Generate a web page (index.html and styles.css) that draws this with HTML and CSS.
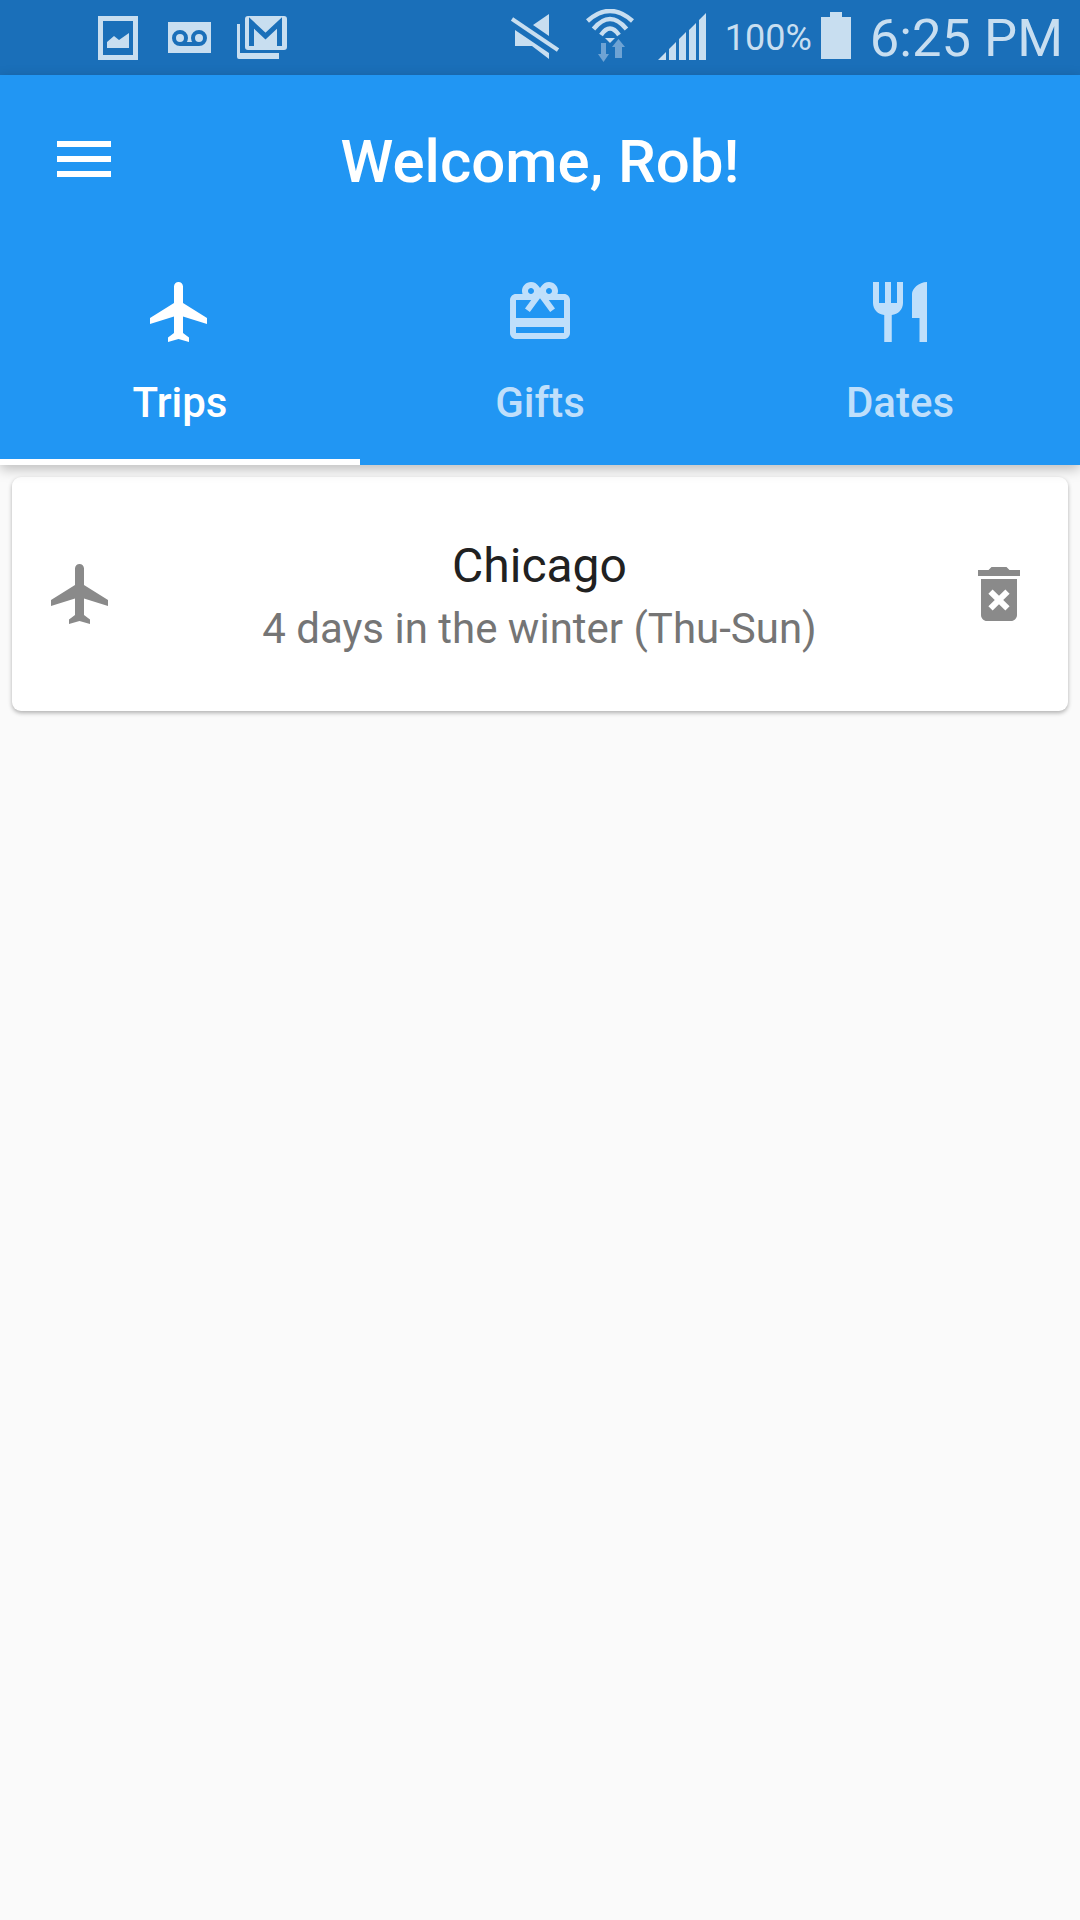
FILE: index.html
```html
<!DOCTYPE html>
<html lang="en">
<head>
    <meta charset="UTF-8">
    <title>Welcome, Rob!</title>
    <link rel="stylesheet" href="styles.css">
</head>
<body>
    <div class="status-bar">
        <div class="status-left">
            <svg class="st-image" viewBox="0 0 40 44"><path fill="#c8def0" fill-rule="evenodd" d="M0 0h40v44H0zM5 5v34h30V5z"/><path fill="#c8def0" d="M9 32v-6l7-6 5 4 10-7v15z"/></svg>
            <svg class="st-voicemail" viewBox="0 0 43 31"><path fill="#c8def0" d="M0 0h43v31H0z"/><g fill="none" stroke="#1a6fb9" stroke-width="4"><circle cx="12" cy="16" r="6"/><circle cx="31" cy="16" r="6"/><path d="M12 22h19"/></g></svg>
            <svg class="st-gmail" viewBox="0 0 50 43"><path fill="#c8def0" d="M0 8h3v29h39v6H2a2 2 0 0 1-2-2z"/><rect x="8" y="0" width="42" height="34" rx="3" fill="#c8def0"/><path fill="none" stroke="#1a6fb9" stroke-width="5" d="M14.500 30V7l14 13 14-13v23"/></svg>
        </div>
        <div class="status-right">
            <svg class="st-mute" viewBox="0 0 48 46"><path fill="#c8def0" d="M38 1L22 12l16 11zM4 17l34 23v6L21 33H4z"/><path stroke="#c8def0" stroke-width="4" d="M1 6l46 31"/></svg>
            <svg class="st-wifi" viewBox="0 0 50 53"><g fill="none" stroke="#c8def0" stroke-width="4.500"><path d="M2.500 12Q25-8 47.500 12"/><path d="M8.500 20Q25 0 41.500 20"/><path d="M16 26Q25 13 34 26"/></g><path fill="#c8def0" d="M20 29h10l-5 5z"/><path fill="#6ea3d4" d="M16 34h5v11h3l-5.500 8L13 45h3zM30 49V38h-3l6.500-8 6.500 8h-3v11z"/></svg>
            <svg class="st-signal" viewBox="0 0 49 47"><path fill="#c8def0" d="M0 47l8-8v8zM11 36l7-7v18h-7zM21 26l7-7v28h-7zM31 17l7-7v37h-7zM41 7l7-7v47h-7z"/></svg>
            <span class="st-pct">100%</span>
            <svg class="st-battery" viewBox="0 0 30 47"><path fill="#c8def0" d="M9 0h12v5h9v42H0V5h9z"/></svg>
            <span class="st-time">6:25 PM</span>
        </div>
    </div>

    <header class="app-header">
        <div class="title-row">
            <svg class="menu-icon" viewBox="0 0 24 24"><path fill="#fff" d="M3 18h18v-2H3v2zm0-5h18v-2H3v2zm0-7v2h18V6H3z"/></svg>
            <h1>Welcome, Rob!</h1>
        </div>
        <nav class="tabs">
            <div class="tab active">
                <svg class="tab-icon" viewBox="0 0 24 24"><path d="M21 16v-2l-8-5V3.500c0-.83-.67-1.500-1.500-1.500S10 2.670 10 3.500V9l-8 5v2l8-2.500V19l-2 1.500V22l3.500-1 3.500 1v-1.500L13 19v-5.500l8 2.500z"/></svg>
                <span>Trips</span>
            </div>
            <div class="tab">
                <svg class="tab-icon" viewBox="0 0 24 24"><path d="M20 6h-2.180c.11-.31.18-.65.18-1 0-1.660-1.340-3-3-3-1.050 0-1.960.54-2.500 1.350l-.5.67-.5-.68C10.960 2.540 10.050 2 9 2 7.340 2 6 3.340 6 5c0 .35.07.69.18 1H4c-1.110 0-1.990.89-1.990 2L2 19c0 1.110.89 2 2 2h16c1.110 0 2-.89 2-2V8c0-1.110-.89-2-2-2zm-5-2c.55 0 1 .45 1 1s-.45 1-1 1-1-.45-1-1 .45-1 1-1zM9 4c.55 0 1 .45 1 1s-.45 1-1 1-1-.45-1-1 .45-1 1-1zm11 15H4v-2h16v2zm0-5H4V8h5.080L7 10.830 8.620 12 11 8.760l1-1.360 1 1.360L15.380 12 17 10.830 14.920 8H20v6z"/></svg>
                <span>Gifts</span>
            </div>
            <div class="tab">
                <svg class="tab-icon" viewBox="0 0 24 24"><path d="M11 9H9V2H7v7H5V2H3v7c0 2.120 1.660 3.840 3.750 3.970V22h2.500v-9.030C11.340 12.840 13 11.120 13 9V2h-2v7zm5-3v8h2.500v8H21V2c-2.760 0-5 2.240-5 4z"/></svg>
                <span>Dates</span>
            </div>
        </nav>
    </header>

    <main class="lista">
        <div class="card">
            <svg class="card-icon" viewBox="0 0 24 24"><path d="M21 16v-2l-8-5V3.500c0-.83-.67-1.500-1.500-1.500S10 2.670 10 3.500V9l-8 5v2l8-2.500V19l-2 1.500V22l3.500-1 3.500 1v-1.500L13 19v-5.500l8 2.500z"/></svg>
            <div class="card-text">
                <div class="card-title">Chicago</div>
                <div class="card-sub">4 days in the winter (Thu-Sun)</div>
            </div>
            <svg class="card-icon" viewBox="0 0 24 24"><path d="M6 19c0 1.100.9 2 2 2h8c1.100 0 2-.9 2-2V7H6v12zm2.460-7.120l1.410-1.410L12 12.590l2.120-2.120 1.410 1.410L13.410 14l2.120 2.120-1.410 1.410L12 15.410l-2.120 2.120-1.410-1.410L10.590 14l-2.130-2.120zM15.500 4l-1-1h-5l-1 1H5v2h14V4z"/></svg>
        </div>
    </main>
</body>
</html>
```

FILE: styles.css
```css
* {
    box-sizing: border-box;
    margin: 0;
    padding: 0;
}

body {
    width: 1080px;
    height: 1920px;
    overflow: hidden;
    background-color: #fafafa;
    font-family: Roboto, sans-serif;
}

svg {
    display: block;
    flex-shrink: 0;
}

/* barra de status */
.status-bar {
    height: 75px;
    background-color: #1a6fb9;
    display: flex;
    align-items: center;
    justify-content: space-between;
    padding: 0 17px 0 98px;
    color: #c8def0;
}

.status-left,
.status-right {
    display: flex;
    align-items: center;
}

.st-image { width: 40px; height: 44px; margin-right: 30px; }
.st-voicemail { width: 43px; height: 31px; margin-right: 26px; }
.st-gmail { width: 50px; height: 43px; }
.st-mute { width: 48px; height: 46px; margin: 0 26px 3px 0; }
.st-wifi { width: 50px; height: 53px; margin: 0 23px 4px 0; }
.st-signal { width: 49px; height: 47px; margin: 0 18px 2px 0; }
.st-pct { font-size: 36px; margin-right: 9px; }
.st-battery { width: 30px; height: 47px; margin: 0 19px 4px 0; }
.st-time { font-size: 52.500px; }

/* cabecalho */
.app-header {
    height: 390px;
    background-color: #2196f3;
    color: #fff;
    position: relative;
    box-shadow: 0 4px 12px rgba(0, 0, 0, 0.25);
}

.title-row {
    height: 168px;
    display: flex;
    align-items: center;
    justify-content: center;
    position: relative;
}

.menu-icon {
    width: 72px;
    height: 72px;
    position: absolute;
    left: 48px;
    top: 48px;
}

h1 {
    font-size: 60px;
    font-weight: 500;
    padding-top: 4px;
}

.tabs {
    height: 222px;
    display: grid;
    grid-template-columns: repeat(3, 1fr);
}

.tab {
    display: flex;
    flex-direction: column;
    align-items: center;
    padding-top: 33px;
    color: #bfdffb;
    font-size: 42px;
    font-weight: 500;
    line-height: 48px;
}

.tab span {
    margin-top: 31px;
}

.tab.active {
    color: #fff;
    border-bottom: 6px solid #fff;
}

.tab-icon {
    width: 72px;
    height: 72px;
    fill: currentColor;
}

/* lista de viagens */
.lista {
    padding: 12px;
}

.card {
    height: 234px;
    background-color: #fff;
    border-radius: 9px;
    box-shadow: 0 2px 4px rgba(0, 0, 0, 0.3);
    display: flex;
    align-items: center;
    padding: 0 33px;
}

.card-icon {
    width: 72px;
    height: 72px;
    fill: #8a8a8a;
}

.card-text {
    flex: 1;
    text-align: center;
    padding: 6px 1px 0 0;
}

.card-title {
    font-size: 48px;
    line-height: 60px;
    color: #212121;
}

.card-sub {
    font-size: 42px;
    line-height: 60px;
    color: #757575;
    margin-top: 3px;
}
```
